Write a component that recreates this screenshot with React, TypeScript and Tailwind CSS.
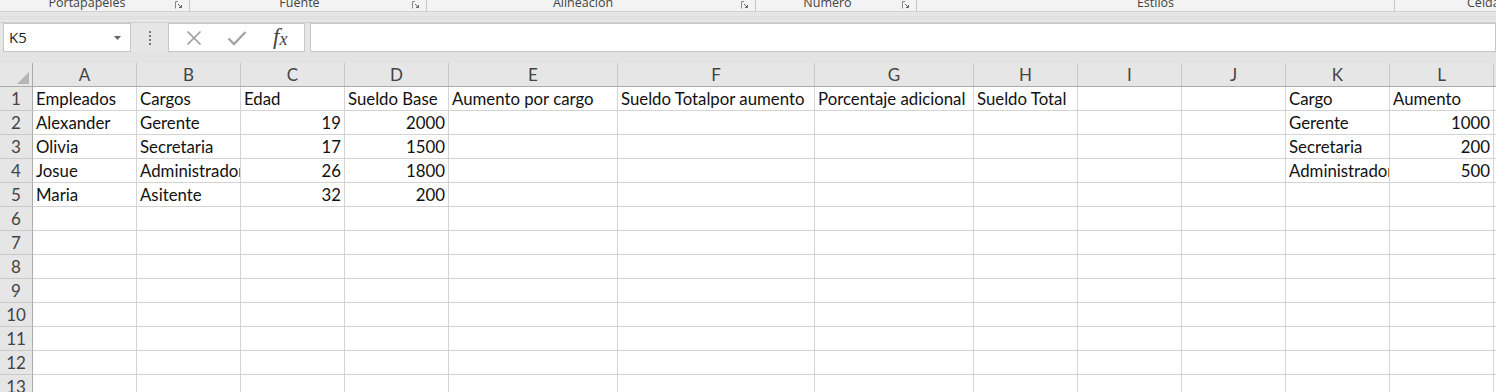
import React from "react";

const COLS = [
  { key: "A", w: "w-[104px]" },
  { key: "B", w: "w-[104px]" },
  { key: "C", w: "w-[104px]" },
  { key: "D", w: "w-[104px]" },
  { key: "E", w: "w-[169px]" },
  { key: "F", w: "w-[197px]" },
  { key: "G", w: "w-[159px]" },
  { key: "H", w: "w-[104px]" },
  { key: "I", w: "w-[104px]" },
  { key: "J", w: "w-[104px]" },
  { key: "K", w: "w-[104px]" },
  { key: "L", w: "w-[104px]" },
];

// A..L, empty string = blank cell
const DATA: string[][] = [
  ["Empleados", "Cargos", "Edad", "Sueldo Base", "Aumento por cargo", "Sueldo Totalpor aumento", "Porcentaje adicional", "Sueldo Total", "", "", "Cargo", "Aumento"],
  ["Alexander", "Gerente", "19", "2000", "", "", "", "", "", "", "Gerente", "1000"],
  ["Olivia", "Secretaria", "17", "1500", "", "", "", "", "", "", "Secretaria", "200"],
  ["Josue", "Administrador", "26", "1800", "", "", "", "", "", "", "Administrador", "500"],
  ["Maria", "Asitente", "32", "200", "", "", "", "", "", "", "", ""],
];

const ROW_COUNT = 13;

const GROUPS = [
  { label: "Portapapeles", w: "w-[190px]", pad: "pr-[15px]", launcher: true },
  { label: "Fuente", w: "w-[237px]", pad: "pr-[17px]", launcher: true },
  { label: "Alineación", w: "w-[329px]", pad: "pr-[16px]", launcher: true },
  { label: "Número", w: "w-[161px]", pad: "pr-[17px]", launcher: true },
  { label: "Estilos", w: "w-[478px]", pad: "", launcher: false },
];

function Launcher() {
  return (
    <svg width="8" height="8" viewBox="0 0 8 8" className="absolute right-[6px] top-[1px]">
      <path d="M0.5 7.5V0.5M0.5 0.5H3" stroke="#8a8a8a" strokeWidth="1" fill="none" />
      <path d="M3 3L6.5 6.5M4 6.5H6.5V4" stroke="#666" strokeWidth="1" fill="none" />
    </svg>
  );
}

function RibbonLabels() {
  return (
    <div className="flex h-[12px] bg-[#f3f3f3] border-b border-[#d2d2d2] overflow-hidden font-[family-name:'Open_Sans',sans-serif] text-[12.5px] text-[#444]">
      {GROUPS.map((g) => (
        <div key={g.label} className={`relative ${g.w} shrink-0 h-full border-r border-[#c6c6c6] ${g.pad}`}>
          <div className="text-center leading-[12px] -mt-[3px] whitespace-nowrap">{g.label}</div>
          {g.launcher && <Launcher />}
        </div>
      ))}
      <div className="pl-[72px] leading-[12px] -mt-[3px] whitespace-nowrap">Celdas</div>
    </div>
  );
}

function FormulaBar() {
  return (
    <div className="bg-[#e6e6e6]">
      <div className="h-[11px] border-b border-[#cfcfcf] flex flex-col justify-center">
        <div className="h-[3px] border-t border-b border-[#dcdcdc]" />
      </div>
      <div className="flex h-[29px] items-stretch">
        <div className="ml-[3px] w-[128px] bg-white border border-[#c6c6c6] flex items-center justify-between pl-[5px] pr-[9px] font-[family-name:'Open_Sans',sans-serif] text-[15px] text-[#222]">
          <span>K5</span>
          <svg width="7" height="4" viewBox="0 0 7 4">
            <path d="M0 0H7L3.5 4Z" fill="#666" />
          </svg>
        </div>
        <div className="w-[37px] flex flex-col items-center justify-center gap-[2px]">
          <span className="w-[2px] h-[2px] bg-[#777]" />
          <span className="w-[2px] h-[2px] bg-[#777]" />
          <span className="w-[2px] h-[2px] bg-[#777]" />
          <span className="w-[2px] h-[2px] bg-[#777]" />
        </div>
        <div className="w-[137px] bg-white border border-[#c6c6c6] flex items-center">
          <div className="w-[48px] flex justify-center pl-[3px]">
            <svg width="16" height="16" viewBox="0 0 16 16">
              <path d="M1.5 1.5L14.5 14.5M14.5 1.5L1.5 14.5" stroke="#9c9c9c" strokeWidth="1.6" fill="none" />
            </svg>
          </div>
          <div className="w-[40px] flex justify-center">
            <svg width="20" height="16" viewBox="0 0 20 16">
              <path d="M1.5 8.5L7 14L18.5 2" stroke="#a5a5a5" strokeWidth="2.4" fill="none" />
            </svg>
          </div>
          <div className="w-[48px] flex justify-center font-[family-name:'Liberation_Serif',serif] italic text-[23px] text-[#444] leading-none -mt-[3px]">
            <span>f</span>
            <span className="text-[18px] mt-[5px]">x</span>
          </div>
        </div>
        <div className="ml-[5px] flex-1 bg-white border border-[#c6c6c6]" />
      </div>
      <div className="h-[11px] bg-[#e3e3e3]" />
    </div>
  );
}

function Sheet() {
  const isNum = (s: string) => /^\d+$/.test(s);
  return (
    <div className="flex flex-col font-[family-name:Lato,sans-serif] text-[16.8px] text-[#111]">
      {/* column headers */}
      <div className="flex h-[24px] bg-[#e6e6e6] border-b border-[#ababab]">
        <div className="w-[33px] shrink-0 border-r border-[#ababab] relative">
          <svg width="12" height="12" viewBox="0 0 12 12" className="absolute right-[3px] bottom-[2px]">
            <path d="M12 0V12H0Z" fill="#b5b5b5" />
          </svg>
        </div>
        {COLS.map((c) => (
          <div key={c.key} className={`${c.w} shrink-0 border-r border-[#c8c8c8] flex items-center justify-center text-[#444] text-[17px]`}>
            {c.key}
          </div>
        ))}
        <div className="flex-1" />
      </div>
      {Array.from({ length: ROW_COUNT }, (_, r) => {
        const row = DATA[r] ?? [];
        return (
          <div key={r} className="flex h-[24px] shrink-0">
            <div className="w-[33px] shrink-0 bg-[#e6e6e6] border-r border-[#ababab] border-b border-b-[#c8c8c8] flex items-center justify-center text-[#444] text-[17px]">
              {r + 1}
            </div>
            {COLS.map((c, i) => {
              const v = row[i] ?? "";
              return (
                <div
                  key={c.key}
                  className={`${c.w} shrink-0 bg-white border-r border-b border-[#d4d4d4] flex items-center px-[3px] overflow-hidden whitespace-nowrap ${isNum(v) ? "justify-end" : "justify-start"}`}
                >
                  {v}
                </div>
              );
            })}
            <div className="flex-1 bg-white border-b border-[#d4d4d4]" />
          </div>
        );
      })}
    </div>
  );
}

export default function App() {
  return (
    <div className="w-[1496px] h-[392px] overflow-hidden bg-[#e6e6e6]">
      <RibbonLabels />
      <FormulaBar />
      <Sheet />
    </div>
  );
}
